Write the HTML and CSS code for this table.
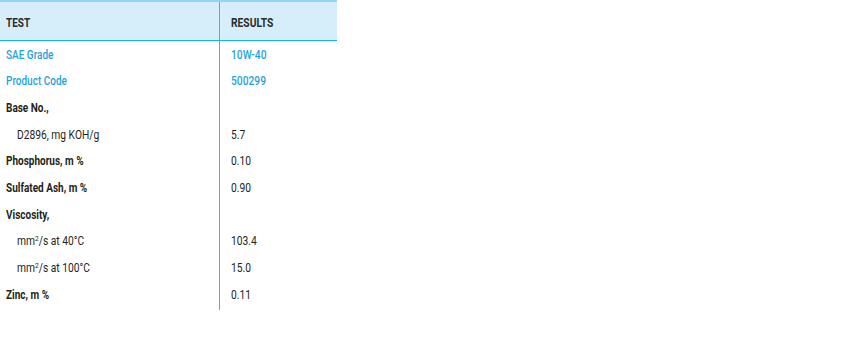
FILE: index.html
```html
<!DOCTYPE html>
<html>
<head>
<meta charset="utf-8">
<link rel="stylesheet" href="styles.css">
</head>
<body>
<div class="spec">
  <div class="row head">
    <div class="cell"><span class="t">TEST</span></div>
    <div class="cell val"><span class="t">RESULTS</span></div>
  </div>
  <div class="row blue">
    <div class="cell"><span class="t">SAE Grade</span></div>
    <div class="cell val"><span class="t">10W-40</span></div>
  </div>
  <div class="row blue">
    <div class="cell"><span class="t">Product Code</span></div>
    <div class="cell val"><span class="t">500299</span></div>
  </div>
  <div class="row">
    <div class="cell"><span class="t">Base No.,</span></div>
    <div class="cell val"></div>
  </div>
  <div class="row sub">
    <div class="cell"><span class="t">D2896, mg KOH/g</span></div>
    <div class="cell val"><span class="t">5.7</span></div>
  </div>
  <div class="row">
    <div class="cell"><span class="t">Phosphorus, m %</span></div>
    <div class="cell val"><span class="t">0.10</span></div>
  </div>
  <div class="row">
    <div class="cell"><span class="t">Sulfated Ash, m %</span></div>
    <div class="cell val"><span class="t">0.90</span></div>
  </div>
  <div class="row">
    <div class="cell"><span class="t">Viscosity,</span></div>
    <div class="cell val"></div>
  </div>
  <div class="row sub">
    <div class="cell"><span class="t">mm<sup>2</sup>/s at 40°C</span></div>
    <div class="cell val"><span class="t">103.4</span></div>
  </div>
  <div class="row sub">
    <div class="cell"><span class="t">mm<sup>2</sup>/s at 100°C</span></div>
    <div class="cell val"><span class="t">15.0</span></div>
  </div>
  <div class="row">
    <div class="cell"><span class="t">Zinc, m %</span></div>
    <div class="cell val"><span class="t">0.11</span></div>
  </div>
</div>
</body>
</html>
```
FILE: styles.css
```css
html, body {
  margin: 0;
  padding: 0;
  background: #ffffff;
}
body {
  font-family: Roboto, "DejaVu Sans Condensed", sans-serif;
  font-size: 12.5px;
  color: #231f20;
}
.spec {
  width: 337px;
  padding-bottom: 3px;
}
.row {
  display: grid;
  grid-template-columns: 219px 1fr;
  height: 26.67px;
}
.cell {
  display: flex;
  align-items: center;
  padding-left: 6px;
  font-weight: 700;
  white-space: nowrap;
}
.t {
  display: inline-block;
  transform: scaleX(0.8);
  transform-origin: left center;
}
.cell.val {
  border-left: 1px solid #3db5ea;
  padding-left: 11px;
  font-weight: 400;
}
.cell.val .t {
  transform: scaleX(0.82);
}
.head {
  height: 38px;
  background: #d5eefa;
  border-top: 2px solid #8fd6f6;
  border-bottom: 1px solid #1db0ef;
}
.head .cell {
  font-weight: 700;
  color: #2b2b2b;
  padding-top: 3px;
}
.head .cell.val {
  font-weight: 700;
}
.blue .cell {
  color: #1fa3dd;
  font-weight: 500;
}
.blue .cell.val {
  font-weight: 500;
}
.sub .cell:first-child {
  font-weight: 400;
  padding-left: 17px;
}
.sub .cell:first-child .t {
  transform: scaleX(0.82);
}
sup {
  font-size: 8px;
  line-height: 0;
  vertical-align: 4px;
}
.spec .row:last-child {
  height: 29px;
  align-items: start;
}
.spec .row:last-child .cell {
  height: 26.67px;
}
.spec .row:last-child .cell.val {
  height: 29px;
  align-items: flex-start;
  padding-top: 6px;
  box-sizing: border-box;
}
```
